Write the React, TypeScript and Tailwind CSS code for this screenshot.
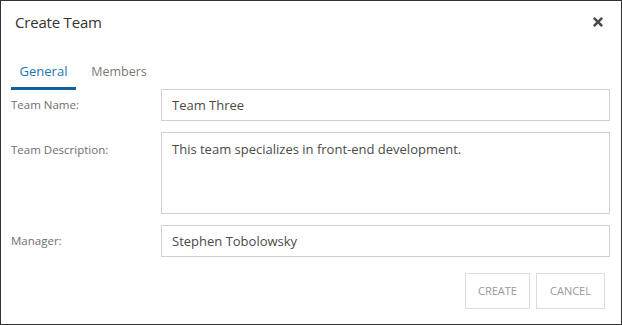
import React, { useState } from 'react';
import { FaTimes } from 'react-icons/fa';

const font = { fontFamily: '"Open Sans", "Noto Sans", sans-serif' };

export default function App() {
  const [tab, setTab] = useState('general');
  const [name, setName] = useState('Team Three');
  const [desc, setDesc] = useState('This team specializes in front-end development.');
  const [manager, setManager] = useState('Stephen Tobolowsky');

  return (
    <div style={font} className="w-[622px] h-[325px] bg-white border border-[#333] flex flex-col">
      {/* Header */}
      <div className="flex items-center justify-between pl-[14px] pr-[16px] h-[42px]">
        <h2 className="text-[15px] text-[#333] tracking-[-0.2px]">Create Team</h2>
        <button className="text-[#4a4a4a]">
          <FaTimes size={14} />
        </button>
      </div>

      {/* Tabs */}
      <div className="flex pl-[10px] mt-[14px] h-[33px]">
        <button
          onClick={() => setTab('general')}
          className={`w-[65px] text-[13px] border-b-[3px] ${tab === 'general' ? 'text-[#1e73b5] border-[#10609e]' : 'text-[#777] border-transparent'}`}
        >
          General
        </button>
        <button
          onClick={() => setTab('members')}
          className={`ml-[5px] w-[76px] text-[12.5px] border-b-[3px] ${tab === 'members' ? 'text-[#1e73b5] border-[#10609e]' : 'text-[#7a7a7a] border-transparent'}`}
        >
          Members
        </button>
      </div>

      {/* Form */}
      <div className="flex flex-col gap-[11px] pl-[10px] pr-[11px] -mt-[1px]">
        <div className="flex items-center">
          <label className="w-[150px] text-[11.5px] text-[#6e6e6e]">Team Name:</label>
          <input
            value={name}
            onChange={e => setName(e.target.value)}
            className="flex-1 h-[32px] border border-[#d0d0d0] px-[10px] text-[13px] text-[#4a4a4a] outline-none"
          />
        </div>
        <div className="flex items-start">
          <label className="w-[150px] text-[11.5px] text-[#6e6e6e] pt-[9px]">Team Description:</label>
          <textarea
            value={desc}
            onChange={e => setDesc(e.target.value)}
            className="flex-1 h-[82px] border border-[#d0d0d0] px-[10px] py-[7px] text-[13px] text-[#4a4a4a] outline-none resize-none"
          />
        </div>
        <div className="flex items-center">
          <label className="w-[150px] text-[11.5px] text-[#6e6e6e]">Manager:</label>
          <input
            value={manager}
            onChange={e => setManager(e.target.value)}
            className="flex-1 h-[32px] border border-[#d0d0d0] px-[10px] text-[13px] text-[#4a4a4a] outline-none"
          />
        </div>
      </div>

      {/* Footer */}
      <div className="flex justify-end gap-[6px] pr-[16px] mt-[16px]">
        <button className="w-[65px] h-[36px] border border-[#dcdcdc] text-[11px] text-[#999] uppercase">Create</button>
        <button className="w-[69px] h-[36px] border border-[#dcdcdc] text-[11px] text-[#999] uppercase">Cancel</button>
      </div>
    </div>
  );
}
